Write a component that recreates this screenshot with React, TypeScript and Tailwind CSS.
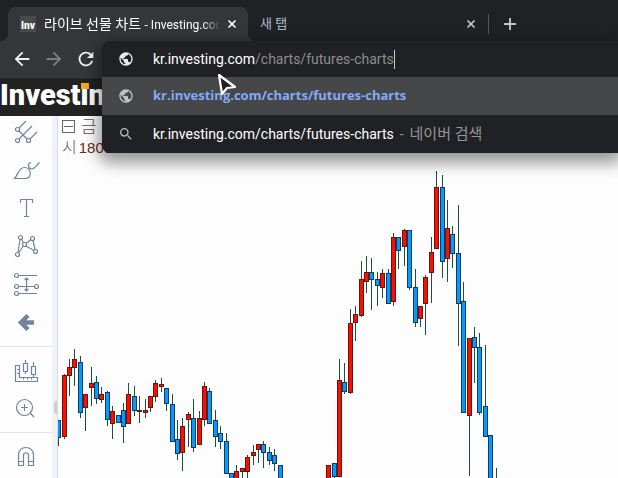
import React, { useState } from 'react';
import { Plus, X } from 'lucide-react';
import { MdArrowBack, MdArrowForward, MdPublic, MdRefresh, MdSearch } from 'react-icons/md';

type Candle = [x: number, high: number, top: number, bottom: number, low: number, up: 0 | 1];

const candles: Candle[] = [
  [58, 420, 420, 438, 446, 0], [64, 374, 375, 437, 439, 1], [69, 359, 367, 376, 396, 1],
  [74, 349, 359, 368, 386, 1], [80, 356, 362, 413, 418, 0], [85, 394, 394, 408, 431, 1],
  [91, 367, 383, 388, 406, 1], [96, 376, 382, 399, 404, 0], [101, 387, 394, 400, 403, 1],
  [107, 391, 392, 420, 426, 0], [112, 406, 411, 424, 439, 1], [118, 415, 415, 423, 423, 0],
  [123, 403, 410, 427, 443, 0], [128, 383, 394, 424, 424, 1], [134, 386, 396, 411, 416, 0],
  [139, 396, 410, 412, 423, 1], [145, 399, 410, 413, 418, 1], [150, 396, 396, 408, 412, 1],
  [155, 380, 383, 397, 402, 1], [161, 378, 384, 387, 392, 1], [166, 388, 388, 404, 411, 0],
  [172, 394, 404, 442, 442, 0], [177, 420, 439, 454, 460, 0], [182, 418, 426, 453, 471, 1],
  [188, 412, 414, 420, 447, 1], [193, 399, 418, 448, 452, 0], [199, 411, 418, 445, 445, 1],
  [204, 382, 386, 420, 426, 1], [209, 388, 391, 424, 424, 0], [215, 410, 420, 437, 447, 0],
  [220, 426, 433, 442, 449, 0], [226, 433, 441, 474, 474, 0], [231, 473, 473, 485, 485, 0],
  [236, 465, 471, 485, 485, 1], [242, 468, 468, 472, 485, 1], [247, 455, 457, 472, 485, 1],
  [253, 445, 452, 456, 465, 1], [258, 444, 444, 450, 463, 1], [263, 441, 444, 453, 468, 0],
  [269, 447, 452, 461, 465, 0], [274, 449, 455, 464, 471, 0], [280, 465, 465, 485, 485, 0],
  [328, 465, 465, 485, 485, 1], [334, 463, 463, 477, 485, 0], [339, 359, 380, 477, 477, 1],
  [344, 363, 382, 392, 394, 0], [350, 309, 323, 393, 394, 1], [355, 306, 314, 323, 341, 1],
  [361, 261, 279, 316, 317, 1], [366, 256, 272, 282, 293, 1], [371, 258, 272, 280, 310, 0],
  [377, 272, 279, 286, 306, 0], [382, 269, 273, 288, 298, 1], [388, 269, 273, 304, 304, 0],
  [393, 233, 237, 302, 306, 1], [398, 237, 237, 251, 269, 0], [404, 229, 230, 247, 266, 1],
  [409, 230, 230, 288, 290, 0], [415, 269, 287, 323, 327, 0], [420, 306, 306, 319, 327, 1],
  [425, 275, 277, 304, 335, 1], [431, 237, 252, 273, 303, 1], [436, 171, 187, 249, 249, 1],
  [442, 175, 187, 262, 278, 0], [447, 200, 228, 259, 282, 1], [452, 226, 234, 254, 268, 0],
  [458, 205, 253, 304, 346, 0], [463, 282, 301, 413, 413, 0], [469, 338, 338, 416, 476, 1],
  [474, 327, 337, 348, 383, 0], [479, 333, 347, 413, 415, 0], [485, 345, 406, 437, 437, 0],
  [490, 435, 435, 485, 485, 0], [496, 468, 485, 485, 485, 0],
];

const ORIGIN_X = 58;
const ORIGIN_Y = 116;

function CandleChart() {
  return (
    <svg className="block" width="560" height="362" shapeRendering="crispEdges" role="img" aria-label="선물 차트">
      <g transform={`translate(${-ORIGIN_X} ${-ORIGIN_Y})`}>
        {candles.map(([x, high, top, bottom, low, up]) => (
          <g key={x}>
            <rect x={x} y={high} width="1" height={low - high} fill="#1d5236" />
            <rect x={x - 2} y={top} width="5" height={bottom - top} fill={up ? '#5c1a12' : '#17375c'} />
            <rect x={x - 1} y={top + 1} width="3" height={Math.max(bottom - top - 2, 0)} fill={up ? '#ff0d00' : '#009dff'} />
          </g>
        ))}
      </g>
    </svg>
  );
}

function ToolButton({ label, children }: { label: string; children: React.ReactNode }) {
  return (
    <button type="button" aria-label={label} className="flex h-[38px] w-full items-start justify-center pt-[2px]">
      <svg width="28" height="28" viewBox="0 0 28 28" fill="none" stroke="#71849b" strokeWidth="1.2">
        {children}
      </svg>
    </button>
  );
}

function DrawingTools() {
  return (
    <aside className="flex w-[52px] shrink-0 flex-col bg-[#fdfdfd]">
      <div className="flex flex-col border-b border-[#dbe5ef] pb-[2px]">
        <ToolButton label="피치포크">
          <path d="M7 10l7-7M7 21L20 8M18 21l7-7M7 13l8 8" />
          <circle cx="5.500" cy="11.500" r="2" />
          <circle cx="5.500" cy="22.500" r="2" />
          <circle cx="16.500" cy="22.500" r="2" />
        </ToolButton>
        <ToolButton label="브러시">
          <path d="M2.500 22.500h11c7 0 6-11-1-11-6 0-6 7-10 11zM19 6.500c-4 1-3 6.500 1 6.500 2 0 3-2 7.500-6.500" />
        </ToolButton>
        <ToolButton label="텍스트">
          <path d="M8.500 9V5.500h12V9M14.500 5.500v17M12 22.500h5" />
        </ToolButton>
        <ToolButton label="패턴">
          <path d="M8 7.500L6 20.500M9.500 7l2 4M11 14.500l-4 6M14 11.500l5-4M14 14l8 4.500M21 8.500l2 9" />
          <circle cx="8.500" cy="5.500" r="2" />
          <circle cx="20.500" cy="6.500" r="2" />
          <circle cx="12.500" cy="12.500" r="2" />
          <circle cx="5.500" cy="22.500" r="2" />
          <circle cx="23.500" cy="19.500" r="2" />
        </ToolButton>
        <ToolButton label="예측">
          <path d="M6.500 5.500H25M6.500 16.500h16M6.500 23.500H25M14.500 8v13M12.500 10l2-2 2 2M12.500 19l2 2 2-2" />
          <circle cx="4.500" cy="5.500" r="2" />
          <circle cx="4.500" cy="16.500" r="2" />
          <circle cx="24.500" cy="16.500" r="2" />
          <circle cx="4.500" cy="23.500" r="2" />
        </ToolButton>
        <ToolButton label="뒤로">
          <path d="M22 14.500H9M16 7.500l-7 7 7 7" strokeWidth="4.500" />
        </ToolButton>
      </div>
      <div className="flex flex-col border-b border-[#dbe5ef] pt-[9px]">
        <ToolButton label="측정">
          <path d="M3.500 7.500h4v12h18v4h-22zM7 11.500H5M7 15.500H5M11.500 19.500v2M15.500 19.500v2M19.500 19.500v2M13.500 2v3M13.500 13v3M21.500 4v4M21.500 16v3" />
          <path d="M11.500 5.500h4v8h-4zM19.500 8.500h4v8h-4z" />
        </ToolButton>
        <ToolButton label="확대">
          <circle cx="12.500" cy="11.500" r="8" />
          <path d="M18 17l4 4M12.500 8v7M9 11.500h7" />
        </ToolButton>
      </div>
      <div className="pt-[7px]">
        <ToolButton label="자석">
          <path d="M6.500 23.500V13c0-10 15-10 15 0v10.500h-5V13c0-3-5-3-5 0v10.500zM6.500 19.500h5M16.500 19.500h5" />
        </ToolButton>
      </div>
    </aside>
  );
}

function TabStrip() {
  return (
    <div className="flex h-[41px] items-end font-[Roboto,'Noto_Sans_CJK_KR',sans-serif]">
      {/* The 8px spans round off the feet of the active tab */}
      <span className="h-2 w-2 shrink-0 bg-[radial-gradient(circle_at_0_0,transparent_8px,#35363a_8px)]" />
      <div className="flex h-[34px] w-[240px] shrink-0 items-center rounded-t-lg bg-[#35363a] pr-2 pl-3 text-white">
        <span className="flex h-4 w-4 shrink-0 items-end justify-center bg-[#4a4a4a] text-[10px] leading-[13px] font-black">
          Inv
        </span>
        <button type="button" className="ml-2 min-w-0 flex-1 overflow-hidden mask-r-from-90% text-left text-[12px] whitespace-nowrap">
          <span className="text-[14px]">라이브 선물 차트 </span>- Investing.com
        </button>
        <button type="button" aria-label="탭 닫기" className="ml-1 p-[2px]">
          <X size={12} strokeWidth={3.5} />
        </button>
      </div>
      <span className="h-2 w-2 shrink-0 bg-[radial-gradient(circle_at_100%_0,transparent_8px,#35363a_8px)]" />
      <div className="flex h-[34px] w-[232px] items-center pr-[11px] pl-1 text-[#a9bfd0]">
        <button type="button" className="flex-1 text-left text-[13px]">새 탭</button>
        <button type="button" aria-label="탭 닫기" className="text-[#c4c7cc]">
          <X size={12} strokeWidth={3.5} />
        </button>
      </div>
      <div className="mb-[7px] h-5 w-px bg-[#55575b]" />
      <button type="button" aria-label="새 탭 열기" className="mb-2 ml-3 text-[#c8cacf]">
        <Plus size={18} strokeWidth={2.5} />
      </button>
    </div>
  );
}

function Omnibox() {
  const [url, setUrl] = useState('kr.investing.com/charts/futures-charts');
  const slash = url.indexOf('/');
  const host = slash < 0 ? url : url.slice(0, slash);

  return (
    <div className="absolute top-[41px] right-0 left-[102px] z-10 rounded-l-lg bg-[#202124] font-[Roboto,'Noto_Sans_CJK_KR',sans-serif] text-[14px] text-white shadow-[0_6px_16px_4px_rgba(0,0,0,0.4)]">
      <label className="flex h-9 items-center pl-4">
        <MdPublic size={16} className="shrink-0 text-[#e8eaed]" />
        <span className="relative ml-[19px] flex-1 whitespace-nowrap">
          <span>{host}</span>
          <span className="text-[#8b8e92]">{url.slice(host.length)}</span>
          <span className="inline-block h-[19px] w-px bg-[#c5c7ca] align-middle" />
          <input
            aria-label="주소창"
            className="absolute inset-0 w-full bg-transparent text-transparent outline-none"
            value={url}
            onChange={(e) => setUrl(e.target.value)}
          />
        </span>
      </label>
      <button type="button" className="flex h-[38px] w-full items-center bg-[#464749] pl-4 text-left font-['Open_Sans'] text-[13px] font-bold text-[#84abf8]">
        <MdPublic size={16} className="shrink-0 text-[#c0c2c5]" />
        <span className="ml-[19px]">kr.investing.com/charts/futures-charts</span>
      </button>
      <button type="button" className="flex h-[38px] w-full items-center pl-4 text-left">
        <MdSearch size={16} className="shrink-0 text-[#b5b8bb]" />
        <span className="ml-[19px] whitespace-pre">kr.investing.com/charts/futures-charts</span>
        <span className="ml-[6px] flex items-center gap-[6px] text-[#94979b]">
          <span>-</span>
          <span className="text-[15px]">네이버 검색</span>
        </span>
      </button>
    </div>
  );
}

export default function App() {
  return (
    <div className="relative min-h-screen overflow-hidden bg-[#fdfdfd] font-['Noto_Sans','Noto_Sans_CJK_KR',sans-serif]">
      <header className="bg-[#202124]">
        <TabStrip />
        <nav className="flex h-9 items-center gap-[10px] bg-[#35363a] pl-[11px] text-[#f1f3f4]">
          <button type="button" aria-label="뒤로"><MdArrowBack size={22} /></button>
          <button type="button" aria-label="앞으로" className="text-[#7c7e82]"><MdArrowForward size={22} /></button>
          <button type="button" aria-label="새로고침"><MdRefresh size={22} /></button>
        </nav>
      </header>
      <Omnibox />

      <div className="h-[39px] border-t border-[#3a3b3f] bg-[#222] font-[Roboto,'Liberation_Sans',sans-serif] text-[29px] leading-[34px] font-black text-white">
        <a href="#home" className="whitespace-nowrap">
          Invest
          <span className="relative">
            i
            <span className="absolute top-[5px] left-0 h-[6px] w-[8px] bg-[#f7a81b]" />
          </span>
          ng
        </a>
      </div>

      <main className="flex">
        <DrawingTools />
        <div className="flex w-[6px] shrink-0 flex-col items-end border-r border-[#d5dae3] bg-[#f0f2f6] pt-[285px]">
          <button type="button" aria-label="패널 접기" className="h-[13px] w-[3px] rounded-l-full bg-[#cfcfcf]" />
        </div>
        <section className="relative min-w-0 flex-1 overflow-hidden">
          <div className="absolute top-0 left-1 text-[16px] leading-[21px] whitespace-nowrap text-[#555]">
            <div className="flex items-center gap-[6px] text-[17px]">
              <button type="button" aria-label="접기" className="flex h-[13px] w-[13px] items-center justify-center border border-[#666]">
                <span className="h-px w-[9px] bg-[#666]" />
              </button>
              <span className="font-light">금</span>
            </div>
            <div className="flex gap-[2px]">
              <span className="font-light">시</span>
              <span className="font-['Liberation_Sans'] text-[15px] text-[#6b2a24]">1800</span>
            </div>
          </div>
          <CandleChart />
        </section>
      </main>

      {/* Mouse pointer */}
      <svg className="absolute top-[73px] left-[217px] z-20" width="22" height="24" viewBox="0 0 22 24">
        <path d="M2 2l16 12-8 1-5 6z" fill="#202124" stroke="#fff" strokeWidth="2.200" strokeLinejoin="round" />
      </svg>
    </div>
  );
}
